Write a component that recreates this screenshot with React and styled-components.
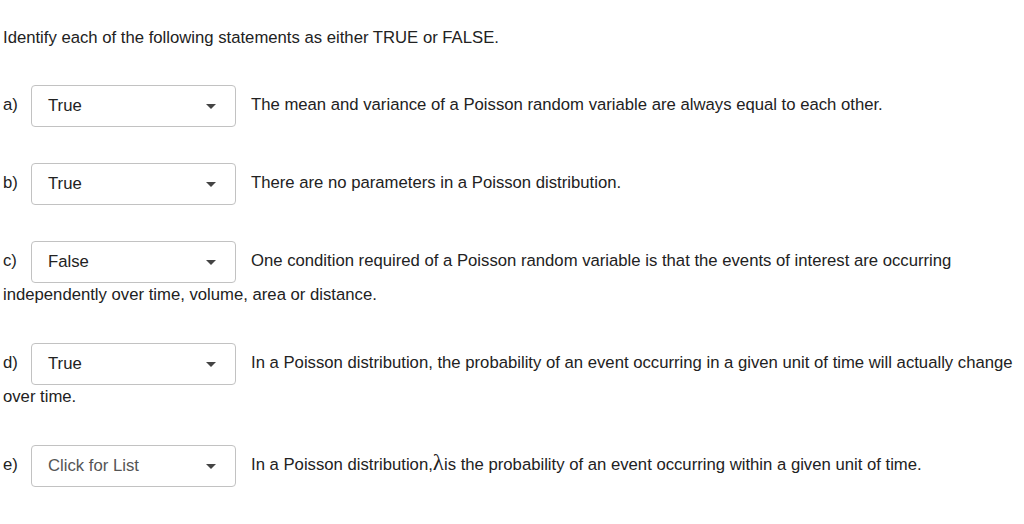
import styled, { createGlobalStyle } from "styled-components";

const GlobalStyle = createGlobalStyle`
	body {
		margin: 0;
		background: #ffffff;
		font-family: "Liberation Sans", Arial, sans-serif;
		font-size: 16.7px;
		color: #222222;
	}
`;

const rows = [
	{ id: "a", value: "True", text: "The mean and variance of a Poisson random variable are always equal to each other." },
	{ id: "b", value: "True", text: "There are no parameters in a Poisson distribution." },
	{
		id: "c",
		value: "False",
		text: "One condition required of a Poisson random variable is that the events of interest are occurring independently over time, volume, area or distance.",
	},
	{
		id: "d",
		value: "True",
		text: "In a Poisson distribution, the probability of an event occurring in a given unit of time will actually change over time.",
	},
	{ id: "e", value: null, lambda: true },
];

const App = () => {
	return (
		<>
			<GlobalStyle />
			<Page>
				<Heading>Identify each of the following statements as either TRUE or FALSE.</Heading>
				{rows.map((row) => (
					<Row key={row.id}>
						<Label>{row.id})</Label>
						<Select $placeholder={!row.value}>
							<span>{row.value || "Click for List"}</span>
							<Caret />
						</Select>
						{row.lambda ? (
							<>
								In a Poisson distribution,<Lambda>λ</Lambda>is the probability of an event occurring
								within a given unit of time.
							</>
						) : (
							row.text
						)}
					</Row>
				))}
			</Page>
		</>
	);
};

export default App;

const Page = styled.div`
	width: 1019px;
	padding: 26px 0 0 3px;
	line-height: 24px;
`;

const Heading = styled.p`
	margin: 0 0 35px;
`;

const Row = styled.p`
	margin: 0 0 36px;
`;

const Label = styled.span`
	display: inline-block;
	width: 28px;
`;

const Select = styled.span`
	display: inline-flex;
	align-items: center;
	justify-content: space-between;
	box-sizing: border-box;
	vertical-align: middle;
	width: 205px;
	height: 42px;
	margin-right: 15px;
	padding: 0 19px 0 16px;
	border: 1px solid #c2c2c2;
	border-radius: 4px;
	background: #ffffff;
	color: ${({ $placeholder }) => ($placeholder ? "#555555" : "#222222")};
`;

const Caret = styled.span`
	width: 0;
	height: 0;
	border-left: 5px solid transparent;
	border-right: 5px solid transparent;
	border-top: 5px solid #444444;
`;

const Lambda = styled.span`
	font-family: "Liberation Serif", "Times New Roman", serif;
	font-size: 23px;
`;
